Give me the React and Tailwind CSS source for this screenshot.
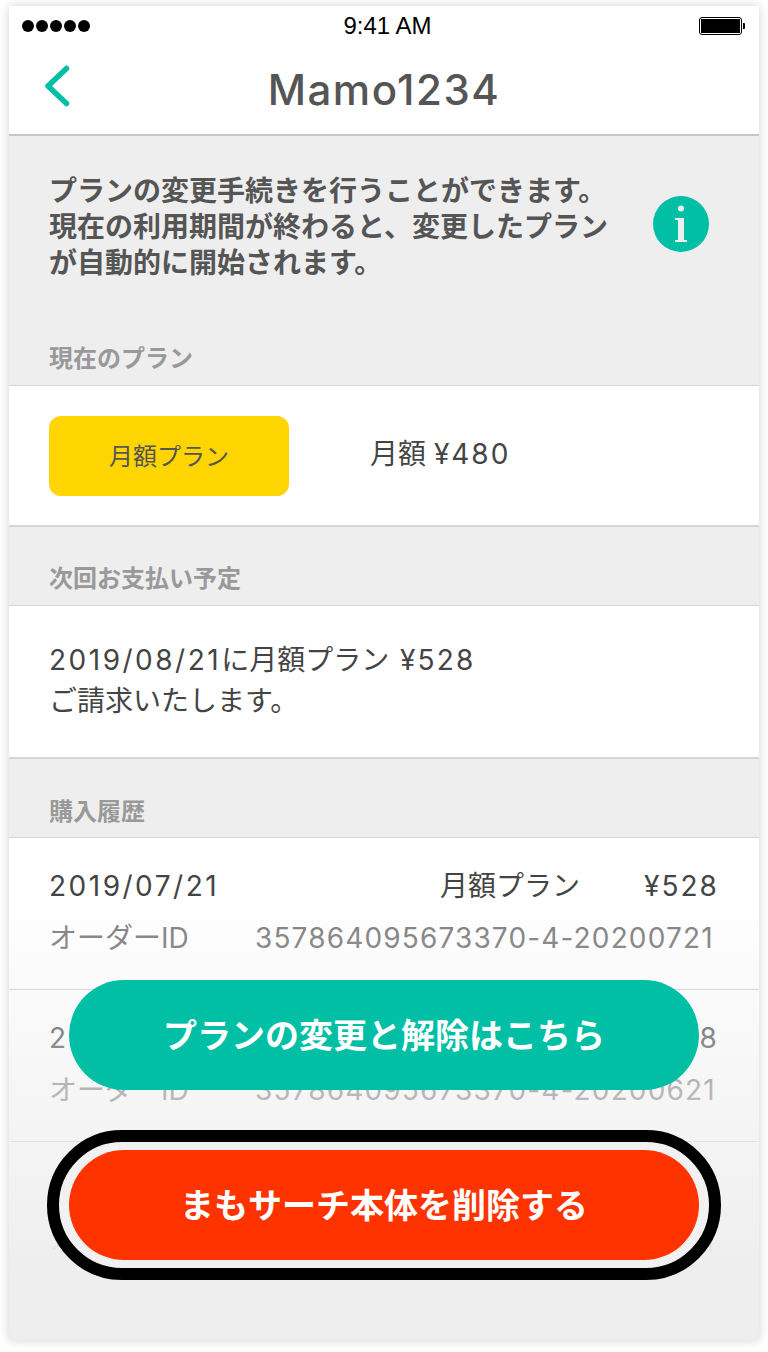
import React from 'react';

const cjk = { fontFamily: 'Inter, "Noto Sans CJK JP", sans-serif' };

const SectionLabel = ({ children, className = '' }) => (
  <div className={`px-[40px] text-[24px] font-bold leading-[32px] text-[#999999] ${className}`}>{children}</div>
);

const OrderRow = ({ date, price, id }) => (
  <div className="border-b border-[#d0d0d0] px-[40px] pb-[31px] pt-[28px] text-[28px] leading-[40px]">
    <div className="flex text-[#444444]">
      <span className="w-[391px] tracking-[2.5px]">{date}</span>
      <span className="w-[204px]">月額プラン</span>
      <span className="tracking-[2px]">{price}</span>
    </div>
    <div className="mt-[12px] flex text-[#777777]">
      <span className="w-[206px]">オーダーID</span>
      <span className="tracking-[1.15px]">{id}</span>
    </div>
  </div>
);

const App = () => {
  return (
    <div className="h-[1352px] w-[768px] bg-white pl-[9px] pt-[6px]" style={cjk}>
      <div className="relative h-[1334px] w-[750px] overflow-hidden bg-[#eeeeee] shadow-[0_0_10px_rgba(0,0,0,0.18)]">
        {/* status bar */}
        <div className="relative flex h-[40px] items-center justify-between bg-white pl-[13px] pr-[14px]">
          <div className="flex gap-[2px]">
            {[0, 1, 2, 3, 4].map((i) => (
              <span key={i} className="h-[12px] w-[12px] rounded-full bg-black" />
            ))}
          </div>
          <span className="mr-[14px] text-[24px] leading-none text-black" style={{ fontFamily: '"Liberation Sans", sans-serif' }}>9:41 AM</span>
          <svg width="46" height="20" viewBox="0 0 46 20">
            <rect x="0.5" y="1.5" width="42" height="17" rx="2.5" fill="none" stroke="#000" />
            <rect x="2" y="3" width="39" height="14" fill="#000" />
            <path d="M44 7h1a1 1 0 0 1 1 1v4a1 1 0 0 1-1 1h-1z" fill="#000" />
          </svg>
        </div>

        {/* nav */}
        <div className="relative flex h-[90px] items-center justify-center border-b-2 border-[#c8c7cc] bg-white">
          <svg className="absolute left-[34px] top-[18px]" width="30" height="44" viewBox="0 0 30 44">
            <path d="M23.5 4.5 L5 22 L23.5 39.5" fill="none" stroke="#00BFA5" strokeWidth="5.5" strokeLinecap="round" strokeLinejoin="round" />
          </svg>
          <span className="text-[42px] font-medium leading-none tracking-[1.5px] text-[#555555]">Mamo1234</span>
        </div>

        {/* intro */}
        <div className="flex items-center justify-between pl-[40px] pr-[50px] pt-[37px]">
          <p className="w-[570px] text-[28px] font-bold leading-[36px] text-[#555555]">
            プランの変更手続きを行うことができます。<br />現在の利用期間が終わると、変更したプラン<br />が自動的に開始されます。
          </p>
          <svg className="mb-[6px]" width="56" height="56" viewBox="0 0 56 56">
            <circle cx="28" cy="28" r="28" fill="#00BFA5" />
            <circle cx="28" cy="12.5" r="3" fill="#eeeeee" />
            <path d="M22 22h9v22h3v2H22v-2h3V24h-3z" fill="#eeeeee" />
          </svg>
        </div>

        <SectionLabel className="mt-[62px]">現在のプラン</SectionLabel>
        <div className="mt-[10px] flex h-[142px] items-center border-y border-b-2 border-[#d6d6d6] bg-white pl-[40px]">
          <div className="flex h-[80px] w-[240px] items-center justify-center rounded-[12px] bg-[#FFD500] pt-[2px] text-[24px] text-[#555555]">月額プラン</div>
          <span className="mb-[4px] ml-[81px] text-[28px] text-[#444444]">月額 <span className="tracking-[2px]">¥480</span></span>
        </div>

        <SectionLabel className="mt-[36px]">次回お支払い予定</SectionLabel>
        <div className="mt-[10px] h-[154px] border-y border-b-2 border-[#d6d6d6] bg-white px-[40px] pt-[34px] text-[28px] leading-[41px] text-[#444444]">
          <span className="tracking-[2.5px]">2019/08/21</span>に月額プラン <span className="ml-[3px] tracking-[2.2px]">¥528</span><br />ご請求いたします。
        </div>

        <SectionLabel className="mt-[37px]">購入履歴</SectionLabel>
        <div className="mt-[9px] border-t border-[#d6d6d6] bg-white">
          <OrderRow date="2019/07/21" price="¥528" id="357864095673370-4-20200721" />
          <OrderRow date="2019/06/21" price="¥528" id="357864095673370-4-20200621" />
          <OrderRow date="2019/05/21" price="¥528" id="357864095673370-4-20200521" />
        </div>

        {/* fade over the list */}
        <div className="absolute inset-x-0 bottom-0 top-[914px] bg-gradient-to-b from-[#eeeeee]/10 to-[#eeeeee] to-85%" />

        {/* fixed buttons */}
        <div className="absolute left-[60px] top-[974px] flex h-[110px] w-[630px] items-center justify-center rounded-[55px] bg-[#00BFA5] text-[34px] font-bold text-white">
          プランの変更と解除はこちら
        </div>
        <div className="absolute left-[38px] top-[1124px] flex h-[150px] w-[674px] items-center justify-center rounded-[75px] border-[12px] border-black bg-[#f1f1f1]">
          <div className="flex h-[110px] w-[630px] items-center justify-center rounded-[55px] bg-[#FF3300] text-[34px] font-bold text-white">
            まもサーチ本体を削除する
          </div>
        </div>
      </div>
    </div>
  );
};

export default App;
